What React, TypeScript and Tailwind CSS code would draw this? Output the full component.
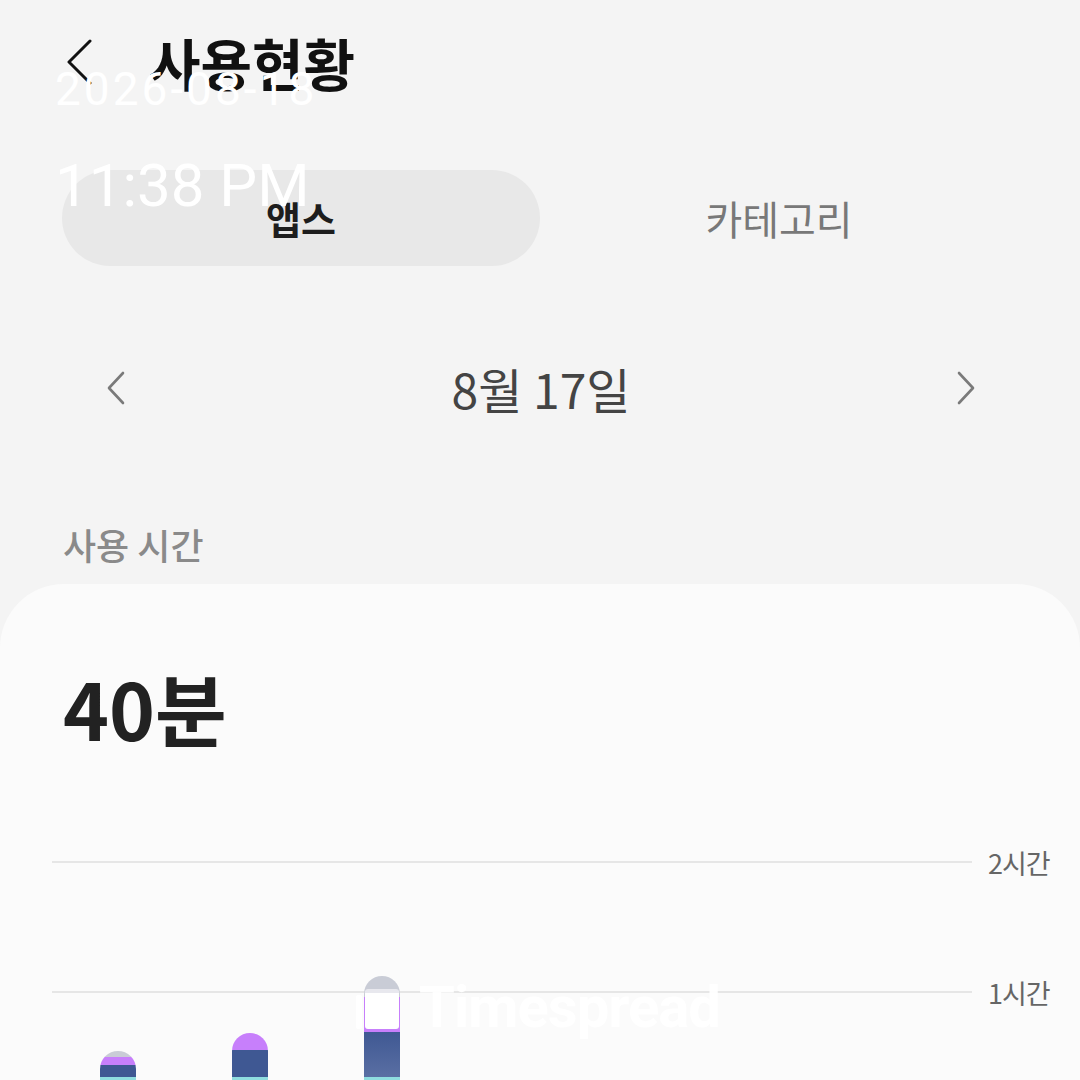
// Usage status screen (사용현황) — daily app usage with stacked bars

const KR = "font-['Noto_Sans_CJK_KR','Noto_Sans',sans-serif]";

interface Segment {
  h: number;
  color: string;
}

const bars: Segment[][] = [
  [
    { h: 6, color: 'bg-[#c9ccd6]' },
    { h: 8, color: 'bg-[#c77ffb]' },
    { h: 12, color: 'bg-[#3f5893]' },
    { h: 4, color: 'bg-[#8fdde0]' },
  ],
  [
    { h: 17, color: 'bg-[#c77ffb]' },
    { h: 27, color: 'bg-[#3f5893]' },
    { h: 4, color: 'bg-[#8fdde0]' },
  ],
  [
    { h: 21, color: 'bg-[#c9ccd6]' },
    { h: 35, color: 'bg-[#c77ffb]' },
    { h: 45, color: 'bg-gradient-to-b from-[#3f5893] to-[#5a6fa3]' },
    { h: 4, color: 'bg-[#8fdde0]' },
  ],
];

function Chevron({ dir, className }: { dir: 'left' | 'right'; className?: string }) {
  return (
    <svg viewBox="0 0 20 34" className={className} fill="none" stroke="currentColor" strokeWidth={2.6} strokeLinecap="round" strokeLinejoin="round">
      {dir === 'left' ? <path d="M17 2 L3 17 L17 32" /> : <path d="M3 2 L17 17 L3 32" />}
    </svg>
  );
}

export default function App() {
  return (
    <div className={`relative w-[1080px] h-[1080px] overflow-hidden bg-[#f4f4f4] ${KR}`}>
      {/* Header */}
      <div className="flex items-center h-[124px] pl-[66px]">
        <svg viewBox="0 0 26 46" className="w-[26px] h-[46px] text-[#111]" fill="none" stroke="currentColor" strokeWidth={3} strokeLinecap="round" strokeLinejoin="round">
          <path d="M24 2 L3 23 L24 44" />
        </svg>
        <h1 className="ml-[57px] text-[56px] font-bold text-[#111] leading-none">사용현황</h1>
      </div>

      {/* Tabs */}
      <div className="flex items-center mt-[46px] px-[62px]">
        <div className="w-[478px] h-[96px] rounded-full bg-[#e8e8e8] flex items-center justify-center">
          <span className="text-[38px] font-bold text-[#1d1d1d] leading-none">앱스</span>
        </div>
        <div className="flex-1 flex items-center justify-center">
          <span className="text-[40px] text-[#787878] leading-none">카테고리</span>
        </div>
      </div>

      {/* Date nav */}
      <div className="flex items-center justify-between mt-[92px] pl-[106px] pr-[104px] h-[60px]">
        <Chevron dir="left" className="w-[20px] h-[34px] text-[#7a7a7a]" />
        <span className="text-[48px] text-[#444] leading-none">8월 17일</span>
        <Chevron dir="right" className="w-[20px] h-[34px] text-[#7a7a7a]" />
      </div>

      {/* Section label */}
      <div className="mt-[108px] pl-[63px] text-[36px] font-medium text-[#8a8a8a] leading-none">사용 시간</div>

      {/* Card */}
      <div className="mt-[22px] rounded-t-[64px] bg-[#fbfbfb] h-[600px]">
        <div className="pt-[84px] pl-[63px] text-[78px] font-bold text-[#222] leading-none">40분</div>

        {/* Chart */}
        <div className="grid mt-[103px] h-[240px]">
          <div className="col-start-1 row-start-1 flex flex-col pl-[52px]">
            <div className="flex items-center h-[26px]">
              <div className="w-[920px] h-[2px] bg-[#e6e6e6]" />
              <span className="ml-[16px] text-[27px] text-[#666] leading-none tracking-[-1px]">2시간</span>
            </div>
            <div className="flex items-center h-[26px] mt-[104px]">
              <div className="w-[920px] h-[2px] bg-[#e6e6e6]" />
              <span className="ml-[16px] text-[27px] text-[#666] leading-none tracking-[-1px]">1시간</span>
            </div>
          </div>
          <div className="col-start-1 row-start-1 self-end flex items-end gap-[96px] pl-[100px] pb-[8px]">
            {bars.map((segs, i) => (
              <div key={i} className="w-[36px] flex flex-col rounded-t-[18px] overflow-hidden">
                {segs.map((s, j) => (
                  <div key={j} className={s.color} style={{ height: s.h }} />
                ))}
              </div>
            ))}
          </div>
        </div>
      </div>

      {/* Screenshot timestamp overlay */}
      <div className="absolute left-[55px] top-[66px] text-white font-['Roboto',sans-serif] font-normal leading-none">
        <div className="text-[46px] tracking-[3px]">2026-08-18</div>
        <div className="mt-[44px] text-[60px]">11:38 PM</div>
      </div>

      {/* Watermark */}
      <div className="absolute left-[356px] top-[978px] flex items-center text-white/95">
        <div className="flex items-end gap-[3px] h-[44px]">
          <div className="w-[6px] h-[34px] bg-white rounded-[2px]" />
          <div className="w-[34px] h-[40px] bg-white rounded-[3px] border-t-[4px] border-[#e8e8ee]" />
        </div>
        <span className="ml-[20px] font-['Roboto',sans-serif] font-bold text-[58px] leading-none tracking-[-1px]">Timespread</span>
      </div>
    </div>
  );
}
